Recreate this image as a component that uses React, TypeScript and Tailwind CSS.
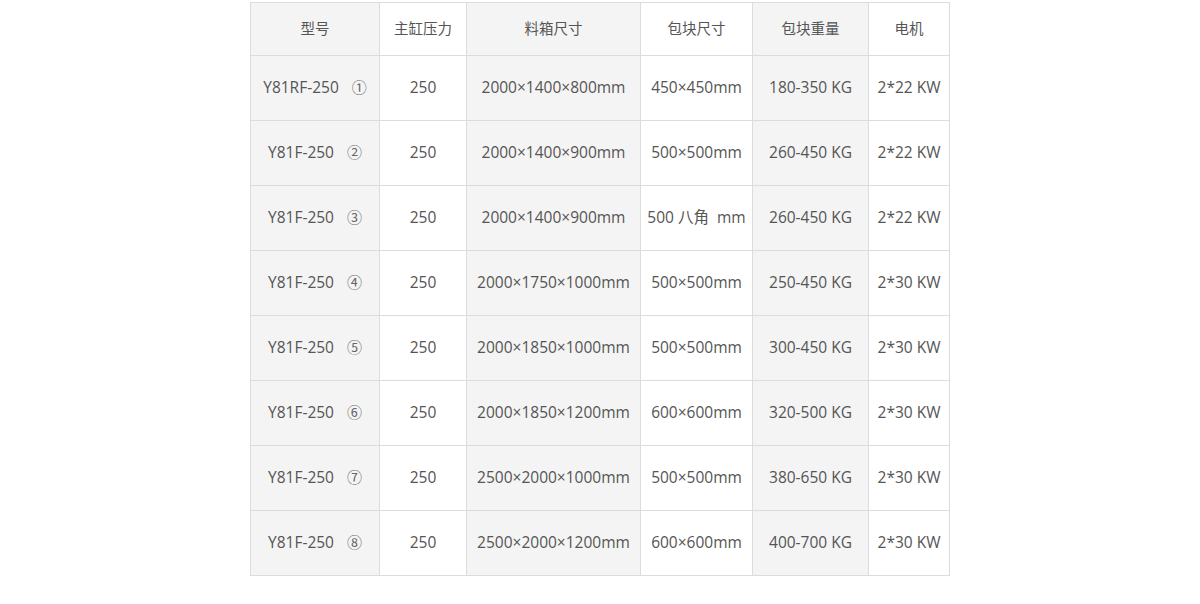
import React from "react";

const headers = ["型号", "主缸压力", "料箱尺寸", "包块尺寸", "包块重量", "电机"];

const widths = ["w-[129px]", "w-[87px]", "w-[174px]", "w-[112px]", "w-[116px]", "w-[81px]"];

const rows = [
  ["Y81RF-250", "①", "250", "2000×1400×800mm", "450×450mm", "180-350 KG", "2*22 KW"],
  ["Y81F-250", "②", "250", "2000×1400×900mm", "500×500mm", "260-450 KG", "2*22 KW"],
  ["Y81F-250", "③", "250", "2000×1400×900mm", "500 八角  mm", "260-450 KG", "2*22 KW"],
  ["Y81F-250", "④", "250", "2000×1750×1000mm", "500×500mm", "250-450 KG", "2*30 KW"],
  ["Y81F-250", "⑤", "250", "2000×1850×1000mm", "500×500mm", "300-450 KG", "2*30 KW"],
  ["Y81F-250", "⑥", "250", "2000×1850×1200mm", "600×600mm", "320-500 KG", "2*30 KW"],
  ["Y81F-250", "⑦", "250", "2500×2000×1000mm", "500×500mm", "380-650 KG", "2*30 KW"],
  ["Y81F-250", "⑧", "250", "2500×2000×1200mm", "600×600mm", "400-700 KG", "2*30 KW"],
];

// odd columns carry the light grey band
const bg = (i: number) => (i % 2 === 0 ? "bg-[#f4f4f4]" : "bg-white");

export default function App() {
  return (
    <div className="flex h-[604px] w-[1200px] items-start justify-center bg-white pt-[2px] font-['Open_Sans','Noto_Sans_CJK_SC',sans-serif] text-[15.5px] text-[#555]">
      <table className="table-fixed border-collapse border border-[#dcdcdc]">
        <thead>
          <tr className="h-[53px]">
            {headers.map((h, i) => (
              <th
                key={h}
                className={`${widths[i]} ${bg(i)} border border-[#dcdcdc] text-center text-[14.5px] font-normal`}
              >
                {h}
              </th>
            ))}
          </tr>
        </thead>
        <tbody>
          {rows.map((r, k) => (
            <tr key={k} className="h-[65px]">
              <td className={`${bg(0)} border border-[#dcdcdc] text-center`}>
                {r[0]}
                <span className="ml-[13px] text-[15px] text-[#666]">{r[1]}</span>
              </td>
              {r.slice(2).map((c, i) => (
                <td
                  key={i}
                  className={`${bg(i + 1)} border border-[#dcdcdc] text-center whitespace-pre`}
                >
                  {c}
                </td>
              ))}
            </tr>
          ))}
        </tbody>
      </table>
    </div>
  );
}
